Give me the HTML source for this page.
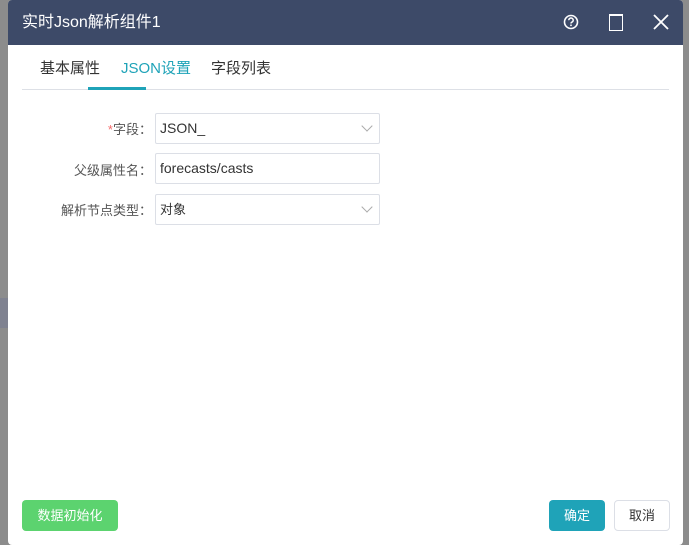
<html><head><style>
body{margin:0;width:689px;height:539px;background:#8c8c8c;position:relative;overflow:hidden;font-family:"Liberation Sans","Noto Sans CJK SC",sans-serif}
.d{position:absolute;left:8px;top:0;width:675px;height:545px;background:#fff;border-radius:4px;overflow:hidden}
.h{height:45px;background:#3d4a68;color:#fff;font-size:16px;line-height:45px;padding-left:14px}
.t{position:absolute;top:57px;font-size:15px;color:#333}
.ln{position:absolute;left:14px;top:89px;width:647px;height:1px;background:#dde0e6}
.ul{position:absolute;left:80px;top:87px;width:58px;height:3px;background:#1fa3b8}
.lb{position:absolute;right:531px;font-size:13px;color:#555;text-align:right;width:140px}
.in{position:absolute;left:147px;width:219px;height:29px;border:1px solid #dcdfe6;border-radius:2px;font-size:14px;color:#333;line-height:29px;padding-left:4px;box-sizing:content-box}
.ar{position:absolute;right:8px;top:8px;width:7px;height:7px;border-right:1px solid #aaa;border-bottom:1px solid #aaa;transform:rotate(45deg)}
.b{position:absolute;top:500px;height:31px;line-height:31px;text-align:center;font-size:13px;border-radius:4px}
</style></head><body>
<div style="position:absolute;left:0;top:298px;width:8px;height:30px;background:#7f8290"></div>
<div class="d">
<div class="h">实时Json解析组件1</div>
<svg style="position:absolute;left:554px;top:13px" width="18" height="18" viewBox="0 0 18 18"><circle cx="9" cy="9" r="6.5" fill="none" stroke="#fff" stroke-width="1.6"/><path d="M6.8 7.2a2.2 2.2 0 1 1 3 2c-.6.3-.8.6-.8 1.3" fill="none" stroke="#fff" stroke-width="1.5"/><circle cx="9" cy="12.3" r=".9" fill="#fff"/></svg>
<div style="position:absolute;left:601px;top:14px;width:12px;height:14px;border:1.6px solid #fff;border-top-width:2.5px"></div>
<svg style="position:absolute;left:644px;top:13px" width="18" height="18"><path d="M2 2L16 16M16 2L2 16" stroke="#fff" stroke-width="1.8"/></svg>
<div class="t" style="left:32px">基本属性</div>
<div class="t" style="left:113px;color:#1fa3b8">JSON设置</div>
<div class="t" style="left:203px">字段列表</div>
<div class="ln"></div><div class="ul"></div>
<div class="lb" style="top:119px"><span style="color:#f56c6c">*</span>字段：</div>
<div class="lb" style="top:160px">父级属性名：</div>
<div class="lb" style="top:200px">解析节点类型：</div>
<div class="in" style="top:113px">JSON_<div class="ar"></div></div>
<div class="in" style="top:153px">forecasts/casts</div>
<div class="in" style="top:194px;font-size:13px">对象<div class="ar"></div></div>
<div class="b" style="left:14px;width:96px;background:#5cd36f;color:#fff">数据初始化</div>
<div class="b" style="left:541px;width:56px;background:#1fa3b8;color:#fff">确定</div>
<div class="b" style="left:606px;width:54px;height:29px;line-height:29px;border:1px solid #dcdfe6;color:#333">取消</div>
</div>
</body></html>
